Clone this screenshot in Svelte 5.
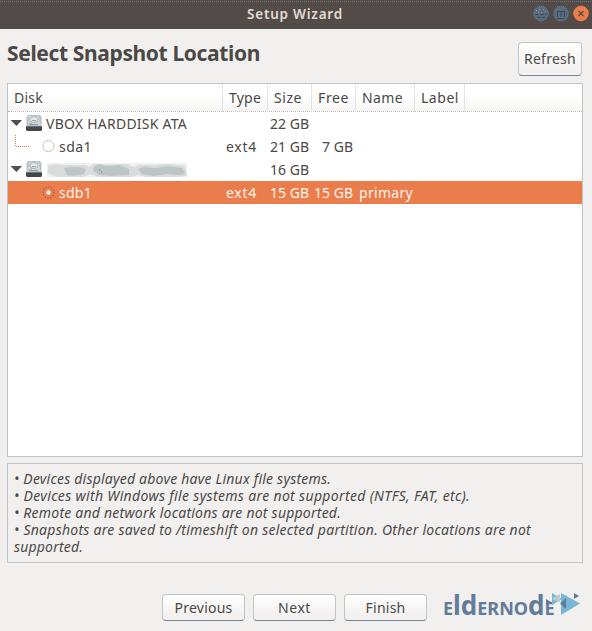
<script>
  // Adjusts tracking so a label fills its allotted advance width.
  function fit(node, width) {
    const natural = node.getBoundingClientRect().width;
    const count = node.textContent.length;
    node.style.letterSpacing = `${(width - natural) / count}px`;
  }

  const columns = [
    ['Disk', 29], ['Type', 32], ['Size', 28], ['Free', 31], ['Name', 41], ['Label', 38], ['', 0]
  ];

  const rows = [
    { kind: 'disk', name: 'VBOX HARDDISK ATA', nameW: 141, size: '22 GB' },
    { kind: 'part', name: 'sda1', nameW: 33, type: 'ext4', size: '21 GB', free: '7 GB', freeW: 31 },
    { kind: 'disk', name: '', size: '16 GB' },
    { kind: 'part', name: 'sdb1', nameW: 33, type: 'ext4', size: '15 GB', free: '15 GB', freeW: 39, label: 'primary', selected: true }
  ];

  const notes = [
    ['• Devices displayed above have Linux file systems.', 317],
    ['• Devices with Windows file systems are not supported (NTFS, FAT, etc).', 456],
    ['• Remote and network locations are not supported.', 327],
    ['• Snapshots are saved to /timeshift on selected partition. Other locations are not', 517],
    ['supported.', 69]
  ];

  const actions = [['Previous', 58], ['Next', 33], ['Finish', 40]];
</script>

<main class="window">
  <header class="titlebar">
    <span class="title"><span class="txt" use:fit={96}>Setup Wizard</span></span>
    <svg class="controls" width="58" height="18" viewBox="0 0 58 18">
      <g fill="none" stroke="#617b99" stroke-width="1.2">
        <circle cx="9" cy="8.5" r="7.3" fill="#566b84" stroke-dasharray="1 1" />
        <circle cx="29" cy="8.5" r="7.3" fill="#566b84" stroke-dasharray="1 1" />
      </g>
      <path d="M4 5.5h1m2-1h1m3 0h1m1 2h1M6 7.5h1m2 0h1" stroke="#e08058" />
      <path d="M3 9.5h12M5 12.5h8" stroke="#4b4947" stroke-dasharray="4 1" />
      <path d="M25.5 12V6.5h7V12M29 7v5M25 13.5h8" fill="none" stroke="#4b4947" />
      <circle cx="49" cy="8.5" r="7.8" fill="#eb7c4b" />
      <path d="m46.5 6 5 5m0-5-5 5" stroke="#59493f" stroke-width="1.2" />
    </svg>
  </header>

  <section class="heading">
    <h1><span class="txt" use:fit={253}>Select Snapshot Location</span></h1>
    <button class="refresh"><span class="txt" use:fit={52}>Refresh</span></button>
  </section>

  <section class="table">
    <div class="row head">
      {#each columns as [name, width]}
        <div class="cell">{#if name}<span class="txt" use:fit={width}>{name}</span>{/if}</div>
      {/each}
    </div>
    {#each rows as row}
      <div class="row" class:selected={row.selected}>
        <div class="tree">
          {#if row.kind === 'disk'}
            <svg width="36" height="23" viewBox="0 0 36 23">
              <path d="M2.5 8h11.5l-5.5 6z" fill="#514b48" />
              <path d="M5 9h7l-2 2H7z" fill="#48586c" />
              <path d="M20 3h12l1.5 2v10h-15V5z" fill="#b9c2c5" />
              <path d="M21 4h10l1 9H20z" fill="#d3d8d8" />
              <ellipse cx="26" cy="7.5" rx="4" ry="3" fill="#e6e8e6" stroke="#aab4b8" />
              <path d="M24 8.5h4m-7 4 3-2m-3 2h9" fill="none" stroke="#98a4ac" />
              <path d="M18 15h16v3l-1 1H19l-1-1z" fill="#494645" />
              <path d="M18 14.5h16" stroke="#61758c" />
            </svg>
            {#if row.name}
              <span class="txt" use:fit={row.nameW}>{row.name}</span>
            {:else}
              <svg class="masked" width="140" height="14" viewBox="0 0 140 14">
                <rect width="140" height="14" fill="#f0f0ef" />
                <path d="M1 3q6-3 15-1h22l4 2 5-3q15 1 33 0l7 3 6-2h15l13-1 17 2 2 10-10 1H99l-8-2-7 2H51l-7-3-8 3H9l-8-4z" fill="#d9dcdc" />
                <path d="M17 5q9-1 14-1l8 2-2 5q-10 3-17 1zM47 4l5-3 8 2 13-1 9 4v6l-17 1-13-1-6-4zM91 6l6-2 12 1 11-2 15 2 3 5-4 2-15-1-12 2-12-2z" fill="#bec5c7" />
                <path d="M52 7h1m1 2h1" stroke="#617b99" />
              </svg>
            {/if}
          {:else}
            <svg width="49" height="23" viewBox="0 0 49 23">
              {#if row.selected}
                <circle cx="40.5" cy="11.5" r="5.5" fill="none" stroke="#614b40" stroke-dasharray="1 1.8" />
                <circle cx="40.5" cy="11.5" r="2.2" fill="#f3efec" />
              {:else}
                <path d="M7.5 0v11.5H22" fill="none" stroke="#dd7b50" stroke-dasharray="1 1" />
                <circle cx="40.5" cy="11" r="5.6" fill="#fff" stroke="#c3c6c6" />
              {/if}
            </svg>
            <span class="txt" use:fit={row.nameW}>{row.name}</span>
          {/if}
        </div>
        <div class="type">{#if row.type}<span class="txt" use:fit={31}>{row.type}</span>{/if}</div>
        <div class="amount"><span class="txt" use:fit={39}>{row.size}</span></div>
        <div class="amount free">{#if row.free}<span class="txt" use:fit={row.freeW}>{row.free}</span>{/if}</div>
        <div class="label">{#if row.label}<span class="txt" use:fit={54}>{row.label}</span>{/if}</div>
      </div>
    {/each}
  </section>

  <section class="notes">
    {#each notes as [text, width]}
      <div><span class="txt" use:fit={width}>{text}</span></div>
    {/each}
  </section>

  <footer>
    {#each actions as [name, width]}
      <button><span class="txt" use:fit={width}>{name}</span></button>
    {/each}
    <div class="brand">
      <span class="word">E<span class="tall">ld</span>ERNO<span class="tall">d</span>E</span>
      <svg width="36" height="28" viewBox="0 0 36 28">
        <path d="M16 2v22l19-11.5z" fill="#76b7d8" />
        <path d="M7 2l10 6-10 6z" fill="#76b7d8" />
        <path d="M8 7l7-4v8l-7-2z" fill="#bec9cc" />
        <path d="M21 7v11l-6-5.5z" fill="#617b99" />
        <path d="M1 8l5 3-5 3zM29 2l5 3-5 3z" fill="#617b99" />
      </svg>
    </div>
  </footer>
</main>

<style>
  :global(body) { margin: 0; }
  .window {
    width: 592px; height: 631px; box-sizing: border-box; overflow: hidden;
    background: #f2f0ef; color: #4b4846;
    font-family: "Noto Sans", "Open Sans", sans-serif; font-size: 14px;
    display: flex; flex-direction: column;
  }
  .txt { display: inline-block; white-space: pre; }
  .titlebar {
    height: 29px; background: #524b48; color: #e2dcd3; display: grid;
    grid-template-columns: 247px 1fr 60px; box-sizing: border-box;
    border-top: 1px solid #524b48;
    background-image: linear-gradient(90deg, #6c747d 50%, transparent 50%);
    background-size: 2px 1px; background-repeat: repeat-x;
  }
  .title { grid-column: 2; font-size: 13.5px; font-weight: 600; line-height: 26px; }
  .controls { margin-top: 4px; }
  .heading { height: 54px; display: flex; justify-content: space-between; padding: 0 10px 0 7px; }
  h1 { margin: 0; font-size: 21px; line-height: 49px; font-weight: 700; }
  button {
    font: inherit; color: inherit; padding: 0; box-sizing: border-box;
    border: 1px solid #bfc5c6; border-bottom-color: #71849b; border-radius: 4px;
    background: linear-gradient(#fff, #f3f2f0 75%); display: flex; justify-content: center; align-items: center;
    width: 83px; height: 27px; line-height: 24px;
  }
  .heading .refresh { width: 64px; height: 34px; margin-top: 13px; }
  .table { margin: 0 9px 0 7px; height: 374px; box-sizing: border-box; border: 1px solid #bfc5c6; background: #fff; }
  .row { display: grid; grid-template-columns: 215px 45px 44px 44px 59px 50px 1fr; height: 23px; line-height: 23px; }
  .row.head { height: 28px; line-height: 28px; background: linear-gradient(#fff 45%, #f5f5f4); border-bottom: 1px dotted #c5c1b9; box-sizing: border-box; }
  .cell { padding-left: 6px; border-right: 1px solid #e5e4e1; }
  .cell:last-child { border: 0; }
  .tree { display: flex; align-items: flex-start; }
  .tree svg { flex: none; }
  .tree svg + .txt { margin-left: 2px; }
  .tree .masked { margin: 5px 0 0 3px; }
  .type { padding-left: 3px; }
  .amount { text-align: right; padding-right: 3px; }
  .label { padding-left: 3px; }
  .selected { background: #eb7c4b; color: #fff5ee; }
  .notes {
    margin: 6px 9px 0 7px; height: 100px; box-sizing: border-box; border: 1px solid #bfc5c6;
    padding: 6px 6px; line-height: 17px; font-style: italic;
  }
  footer { display: flex; gap: 8px; padding: 31px 0 0 162px; }
  .brand { display: flex; margin: -3px 0 0 8px; height: 34px; color: #617b99; }
  .word { width: 102px; white-space: nowrap; font-size: 18px; font-weight: 700; line-height: 35px; }
  .tall { font-size: 26px; line-height: 1; }
  .brand svg { flex: none; }
</style>
